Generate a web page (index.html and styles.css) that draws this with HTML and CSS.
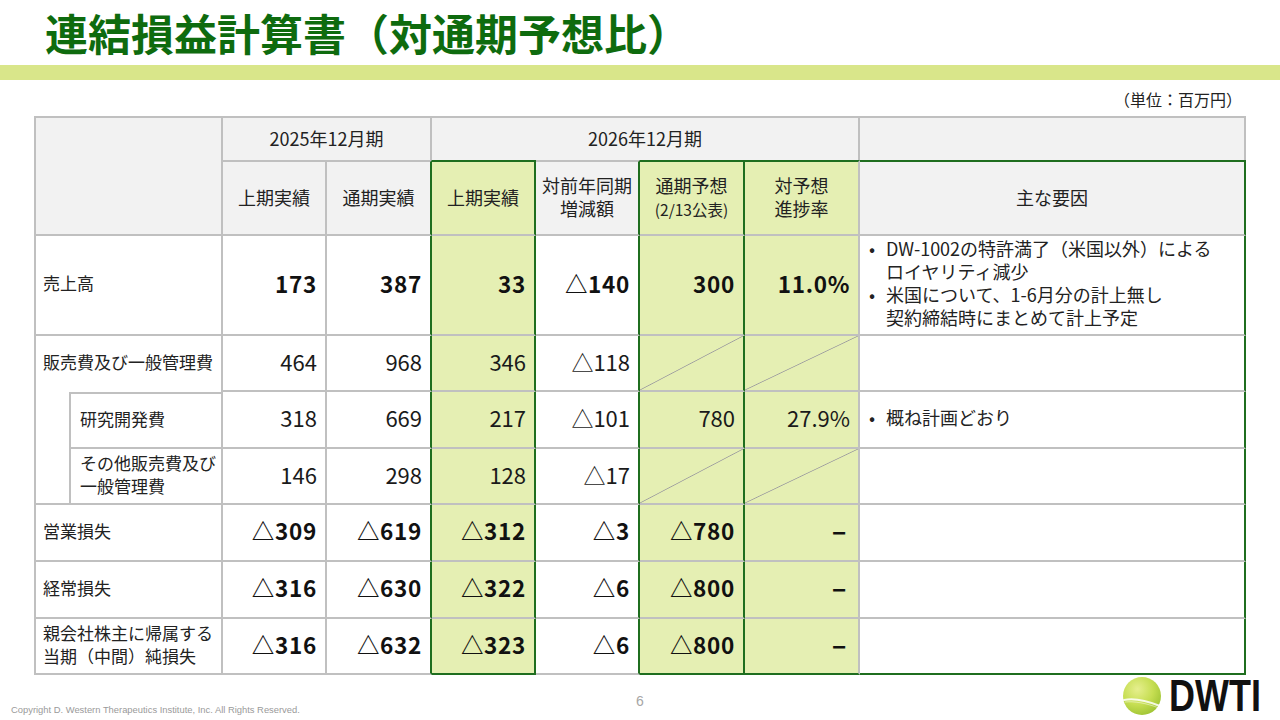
FILE: index.html
```html
<!DOCTYPE html>
<html lang="ja">
<head>
<meta charset="utf-8">
<title>連結損益計算書（対通期予想比）</title>
<link rel="stylesheet" href="styles.css">
</head>
<body>
<h1 class="title">連結損益計算書（対通期予想比）</h1>
<div class="bar"></div>
<div class="unit">（単位：百万円）</div>
<table class="pl">
  <colgroup>
    <col class="w-a"><col class="w-b"><col class="w-n1"><col class="w-n2"><col class="w-n3"><col class="w-n4"><col class="w-n5"><col class="w-n6"><col class="w-note">
  </colgroup>
  <thead>
    <tr class="h1">
      <th colspan="2" rowspan="2" class="corner"></th>
      <th colspan="2" class="grp">2025年12月期</th>
      <th colspan="4" class="grp">2026年12月期</th>
      <th class="grp"></th>
    </tr>
    <tr class="h2">
      <th>上期実績</th>
      <th class="g-right">通期実績</th>
      <th class="gf g-top g-right">上期実績</th>
      <th class="g-right">対前年同期<br>増減額</th>
      <th class="gf g-top g-right">通期予想<br><span class="sm">(2/13公表)</span></th>
      <th class="gf g-top">対予想<br>進捗率</th>
      <th class="g-top g-right">主な要因</th>
    </tr>
  </thead>
  <tbody>
    <tr class="r-sales">
      <td colspan="2" class="label">売上高</td>
      <td class="num b">173</td>
      <td class="num b g-right">387</td>
      <td class="num b gf g-right">33</td>
      <td class="num b g-right">△140</td>
      <td class="num b gf g-right">300</td>
      <td class="num b gf">11.0%</td>
      <td class="note g-right">
        <ul>
          <li>DW-1002の特許満了（米国以外）による<br>ロイヤリティ減少</li>
          <li>米国について、1-6月分の計上無し<br>契約締結時にまとめて計上予定</li>
        </ul>
      </td>
    </tr>
    <tr class="r-56">
      <td colspan="2" class="label open">販売費及び一般管理費</td>
      <td class="num">464</td>
      <td class="num g-right">968</td>
      <td class="num gf g-right">346</td>
      <td class="num g-right">△118</td>
      <td class="gf diag g-right"></td>
      <td class="gf diag"></td>
      <td class="note g-right"></td>
    </tr>
    <tr class="r-57">
      <td rowspan="2" class="indent"></td>
      <td class="label sub top">研究開発費</td>
      <td class="num">318</td>
      <td class="num g-right">669</td>
      <td class="num gf g-right">217</td>
      <td class="num g-right">△101</td>
      <td class="num gf g-right">780</td>
      <td class="num gf">27.9%</td>
      <td class="note g-right">
        <ul>
          <li>概ね計画どおり</li>
        </ul>
      </td>
    </tr>
    <tr class="r-56">
      <td class="label sub">その他販売費及び<br>一般管理費</td>
      <td class="num">146</td>
      <td class="num g-right">298</td>
      <td class="num gf g-right">128</td>
      <td class="num g-right">△17</td>
      <td class="gf diag g-right"></td>
      <td class="gf diag"></td>
      <td class="note g-right"></td>
    </tr>
    <tr class="r-57">
      <td colspan="2" class="label">営業損失</td>
      <td class="num b">△309</td>
      <td class="num b g-right">△619</td>
      <td class="num b gf g-right">△312</td>
      <td class="num b g-right">△3</td>
      <td class="num b gf g-right">△780</td>
      <td class="num b gf dash">–</td>
      <td class="note g-right"></td>
    </tr>
    <tr class="r-57">
      <td colspan="2" class="label">経常損失</td>
      <td class="num b">△316</td>
      <td class="num b g-right">△630</td>
      <td class="num b gf g-right">△322</td>
      <td class="num b g-right">△6</td>
      <td class="num b gf g-right">△800</td>
      <td class="num b gf dash">–</td>
      <td class="note g-right"></td>
    </tr>
    <tr class="r-56">
      <td colspan="2" class="label">親会社株主に帰属する<br>当期（中間）純損失</td>
      <td class="num b">△316</td>
      <td class="num b g-right">△632</td>
      <td class="num b gf g-right g-bottom">△323</td>
      <td class="num b g-right">△6</td>
      <td class="num b gf g-right g-bottom">△800</td>
      <td class="num b gf g-bottom dash">–</td>
      <td class="note g-right g-bottom"></td>
    </tr>
  </tbody>
</table>
<footer class="foot">
  <div class="copy">Copyright D. Western Therapeutics Institute, Inc. All Rights Reserved.</div>
  <div class="page">6</div>
  <div class="logo">
    <svg width="152" height="50" viewBox="0 0 152 50" aria-label="DWTI">
      <defs>
        <radialGradient id="ball" cx="0.38" cy="0.32" r="0.75">
          <stop offset="0" stop-color="#e6ef8e"/>
          <stop offset="0.55" stop-color="#c6de52"/>
          <stop offset="1" stop-color="#9cc232"/>
        </radialGradient>
      </defs>
      <circle cx="23" cy="26" r="19" fill="url(#ball)"/>
      <path d="M5 30 C 14 28, 26 30, 41 36" fill="none" stroke="#ffffff" stroke-width="2.2" stroke-opacity="0.85" stroke-linecap="round"/>
      <path d="M6 32 C 15 31, 27 33, 40 38" fill="none" stroke="#ffffff" stroke-width="0.8" stroke-opacity="0.6"/>
      <text class="logo-text" transform="translate(50 41) scale(1 1.22)">DWTI</text>
    </svg>
  </div>
</footer>
</body>
</html>
```

FILE: styles.css
```css
html, body {
  margin: 0;
  padding: 0;
}

body {
  width: 1280px;
  height: 720px;
  overflow: hidden;
  background: #ffffff;
  color: #1a1a1a;
  font-family: "Noto Sans CJK JP", "Noto Sans", sans-serif;
}

.title {
  margin: 0;
  height: 65px;
  box-sizing: border-box;
  padding: 11px 0 0 45px;
  font-size: 43px;
  line-height: 43px;
  font-weight: 700;
  color: #0e6b0e;
  letter-spacing: 0;
  white-space: nowrap;
}

.bar {
  height: 15px;
  background: #d9e68a;
}

.unit {
  height: 36px;
  box-sizing: border-box;
  padding: 10px 38px 0 0;
  text-align: right;
  font-size: 16px;
  line-height: 18px;
  color: #222222;
}

/* ---------- table ---------- */
.pl {
  margin-left: 34px;
  width: 1212px;
  table-layout: fixed;
  border-collapse: separate;
  border-spacing: 0;
  border-top: 2px solid #c0c0c0;
  border-left: 2px solid #c0c0c0;
}

.w-a { width: 35px; }
.w-b { width: 152px; }
.w-n1 { width: 104px; }
.w-n2 { width: 105px; }
.w-n3 { width: 104px; }
.w-n4 { width: 104px; }
.w-n5 { width: 105px; }
.w-n6 { width: 115px; }
.w-note { width: 386px; }

.pl th,
.pl td {
  box-sizing: border-box;
  padding: 0;
  border: 0;
  border-right: 2px solid #c0c0c0;
  border-bottom: 2px solid #c0c0c0;
  vertical-align: middle;
  background: #ffffff;
}

.pl td {
  padding-bottom: 5px;
}

.pl th {
  background: #f2f2f2;
  font-weight: 400;
  font-size: 18px;
  line-height: 23px;
  color: #222222;
  text-align: center;
  padding-bottom: 2px;
}

.h1 { height: 42px; }
.h1 .grp { border-bottom: 0; }
.h2 { height: 76px; }
.h2 th { border-top: 2px solid #c0c0c0; }
.sm { font-size: 15.5px; }

.r-sales { height: 100px; }
.r-56 { height: 56px; }
.r-57 { height: 57px; }

/* green frames */
.pl .gf { background-color: #e5efb3; }
.pl .g-right { border-right-color: #1f6e1f; }
.pl .g-top { border-top-color: #1f6e1f; }
.pl .g-bottom { border-bottom-color: #1f6e1f; }

/* cells */
.label {
  font-size: 17px;
  line-height: 23px;
  padding-left: 7px !important;
  color: #222222;
}

.label.sub { padding-left: 9px !important; }
.label.open { border-bottom: 0 !important; }
.label.top { border-top: 2px solid #c0c0c0; }

.num {
  text-align: right;
  padding-right: 8px !important;
  font-size: 22px;
  line-height: 26px;
  color: #1a1a1a;
}

.num.b {
  font-weight: 700;
  font-size: 22.5px;
  letter-spacing: 0.7px;
  color: #111111;
}

.num.dash {
  padding-right: 11px !important;
  font-size: 27px;
}

.pl .diag {
  background-image: linear-gradient(to bottom right,
    transparent calc(50% - 0.8px),
    #9f9f9f 50%,
    transparent calc(50% + 0.8px));
}

.note {
  padding-left: 9px !important;
  font-size: 18px;
  line-height: 23px;
  color: #222222;
}

.note ul {
  margin: 0;
  padding: 0;
  list-style: none;
}

.note li {
  display: flex;
}

.note li::before {
  content: "•";
  flex: none;
  width: 17px;
  font-size: 18px;
}

/* ---------- footer ---------- */
.foot {
  height: 45px;
  display: grid;
  grid-template-columns: 1fr auto 1fr;
}

.copy {
  align-self: end;
  padding: 0 0 5px 11px;
  font-family: "Liberation Sans", Arial, sans-serif;
  font-size: 9.4px;
  line-height: 10px;
  color: #9a9a9a;
  white-space: nowrap;
}

.page {
  align-self: start;
  padding-top: 18px;
  font-family: "Liberation Sans", Arial, sans-serif;
  font-size: 14px;
  line-height: 16px;
  color: #a6a6a6;
}

.logo {
  justify-self: end;
  align-self: start;
  margin-top: -5px;
  padding-right: 9px;
  line-height: 0;
}

.logo-text {
  font-family: "Liberation Sans", Arial, sans-serif;
  font-weight: 700;
  font-size: 36px;
  fill: #111111;
}
```
